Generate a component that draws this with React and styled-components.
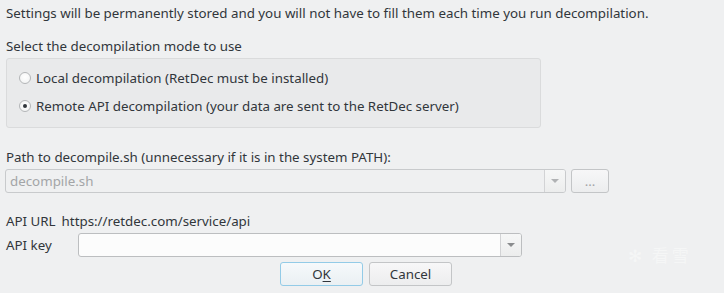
import React from "react";
import styled, { createGlobalStyle } from "styled-components";

const Global = createGlobalStyle`
  html, body { margin: 0; padding: 0; background: #eff0f1; }
  body { width: 724px; height: 293px; overflow: hidden; }
`;

const Page = styled.div`
  position: relative;
  box-sizing: border-box;
  width: 724px;
  height: 293px;
  padding: 4px 0 0 6px;
  display: flex;
  flex-direction: column;
  font-family: "Noto Sans", "DejaVu Sans", sans-serif;
  font-size: 13.33px;
  line-height: 18px;
  color: #31363b;
  background: #eff0f1;
`;

const Label = styled.div`
  margin-top: ${(p) => p.$mt || 0}px;
  white-space: nowrap;
`;

const Group = styled.div`
  box-sizing: border-box;
  margin-top: 3px;
  width: 535px;
  height: 70px;
  border: 1px solid #dadbdc;
  border-radius: 3px;
  background: #e9eaeb;
  padding: 10px 0 0 11px;
  display: flex;
  flex-direction: column;
  gap: 10px;
`;

const RadioRow = styled.label`
  display: flex;
  align-items: center;
  gap: 5px;
  height: 18px;
  white-space: nowrap;
`;

const RadioDot = styled.span`
  box-sizing: border-box;
  width: 12px;
  height: 12px;
  margin-left: 1px;
  border-radius: 50%;
  border: 1px solid #b4b6b8;
  background: radial-gradient(circle at 50% 40%, #ffffff 0%, #f4f5f5 70%);
  display: flex;
  align-items: center;
  justify-content: center;
  &::after {
    content: "";
    width: 4px;
    height: 4px;
    border-radius: 50%;
    background: ${(p) => (p.$checked ? "#31363b" : "transparent")};
  }
`;

const Row = styled.div`
  display: flex;
  align-items: center;
  margin-top: ${(p) => p.$mt || 0}px;
  margin-left: ${(p) => p.$ml || 0}px;
  gap: ${(p) => p.$gap || 0}px;
  white-space: nowrap;
`;

const Combo = styled.div`
  box-sizing: border-box;
  width: ${(p) => p.$w}px;
  height: 24px;
  border: 1px solid ${(p) => (p.$disabled ? "#c8cacc" : "#bcbec0")};
  border-radius: 3px;
  background: ${(p) => (p.$disabled ? "#eff0f1" : "#fcfcfc")};
  display: flex;
  align-items: stretch;
  overflow: hidden;
`;

const ComboText = styled.div`
  flex: 1;
  padding-left: 4px;
  display: flex;
  align-items: center;
  color: #a3a5a7;
`;

const ComboArrow = styled.div`
  width: 20px;
  border-left: 1px solid #d2d3d5;
  background: linear-gradient(#f6f7f7, #eceded);
  display: flex;
  align-items: center;
  justify-content: center;
  &::after {
    content: "";
    width: 0;
    height: 0;
    border-left: 4px solid transparent;
    border-right: 4px solid transparent;
    border-top: 4px solid ${(p) => (p.$disabled ? "#b0b2b4" : "#8a8c8e")};
  }
`;

const Button = styled.button`
  box-sizing: border-box;
  width: ${(p) => p.$w}px;
  height: 24px;
  margin: 0;
  padding: 0;
  border: 1px solid ${(p) => (p.$default ? "#93cbe7" : "#c3c5c7")};
  border-radius: 3px;
  background: ${(p) =>
    p.$default
      ? "linear-gradient(#f6f9fb, #eaf0f3)"
      : "linear-gradient(#f7f7f8, #ecedee)"};
  font-family: inherit;
  font-size: 13.33px;
  color: ${(p) => (p.$muted ? "#a3a5a7" : "#31363b")};
  display: flex;
  align-items: center;
  justify-content: center;
`;

const Underline = styled.span`
  text-decoration: underline;
  text-underline-offset: 2px;
`;

const Url = styled.span`
  margin-left: 6px;
`;

const KeyLabel = styled.span`
  width: 72px;
`;

const Buttons = styled.div`
  display: flex;
  gap: 6px;
  margin-top: 5px;
  margin-left: 274px;
`;

const Watermark = styled.div`
  position: absolute;
  left: 628px;
  top: 246px;
  font-family: "Noto Sans CJK SC", sans-serif;
  font-size: 17px;
  color: #f5f6f6;
  letter-spacing: 3px;
`;

export default function App() {
  return (
    <>
      <Global />
      <Page>
        <Label>
          Settings will be permanently stored and you will not have to fill them each time you run decompilation.
        </Label>
        <Label $mt={15}>Select the decompilation mode to use</Label>
        <Group>
          <RadioRow>
            <RadioDot />
            Local decompilation (RetDec must be installed)
          </RadioRow>
          <RadioRow>
            <RadioDot $checked />
            Remote API decompilation (your data are sent to the RetDec server)
          </RadioRow>
        </Group>
        <Label $mt={20}>Path to decompile.sh (unnecessary if it is in the system PATH):</Label>
        <Row $mt={3} $ml={-1} $gap={5}>
          <Combo $w={561} $disabled>
            <ComboText>decompile.sh</ComboText>
            <ComboArrow $disabled />
          </Combo>
          <Button $w={38} $muted>...</Button>
        </Row>
        <Row $mt={19}>
          API URL<Url>https://retdec.com/service/api</Url>
        </Row>
        <Row $mt={3}>
          <KeyLabel>API key</KeyLabel>
          <Combo $w={444}>
            <ComboText />
            <ComboArrow />
          </Combo>
        </Row>
        <Buttons>
          <Button $w={83} $default>
            O<Underline>K</Underline>
          </Button>
          <Button $w={83}>Cancel</Button>
        </Buttons>
        <Watermark>✻ 看雪</Watermark>
      </Page>
    </>
  );
}
